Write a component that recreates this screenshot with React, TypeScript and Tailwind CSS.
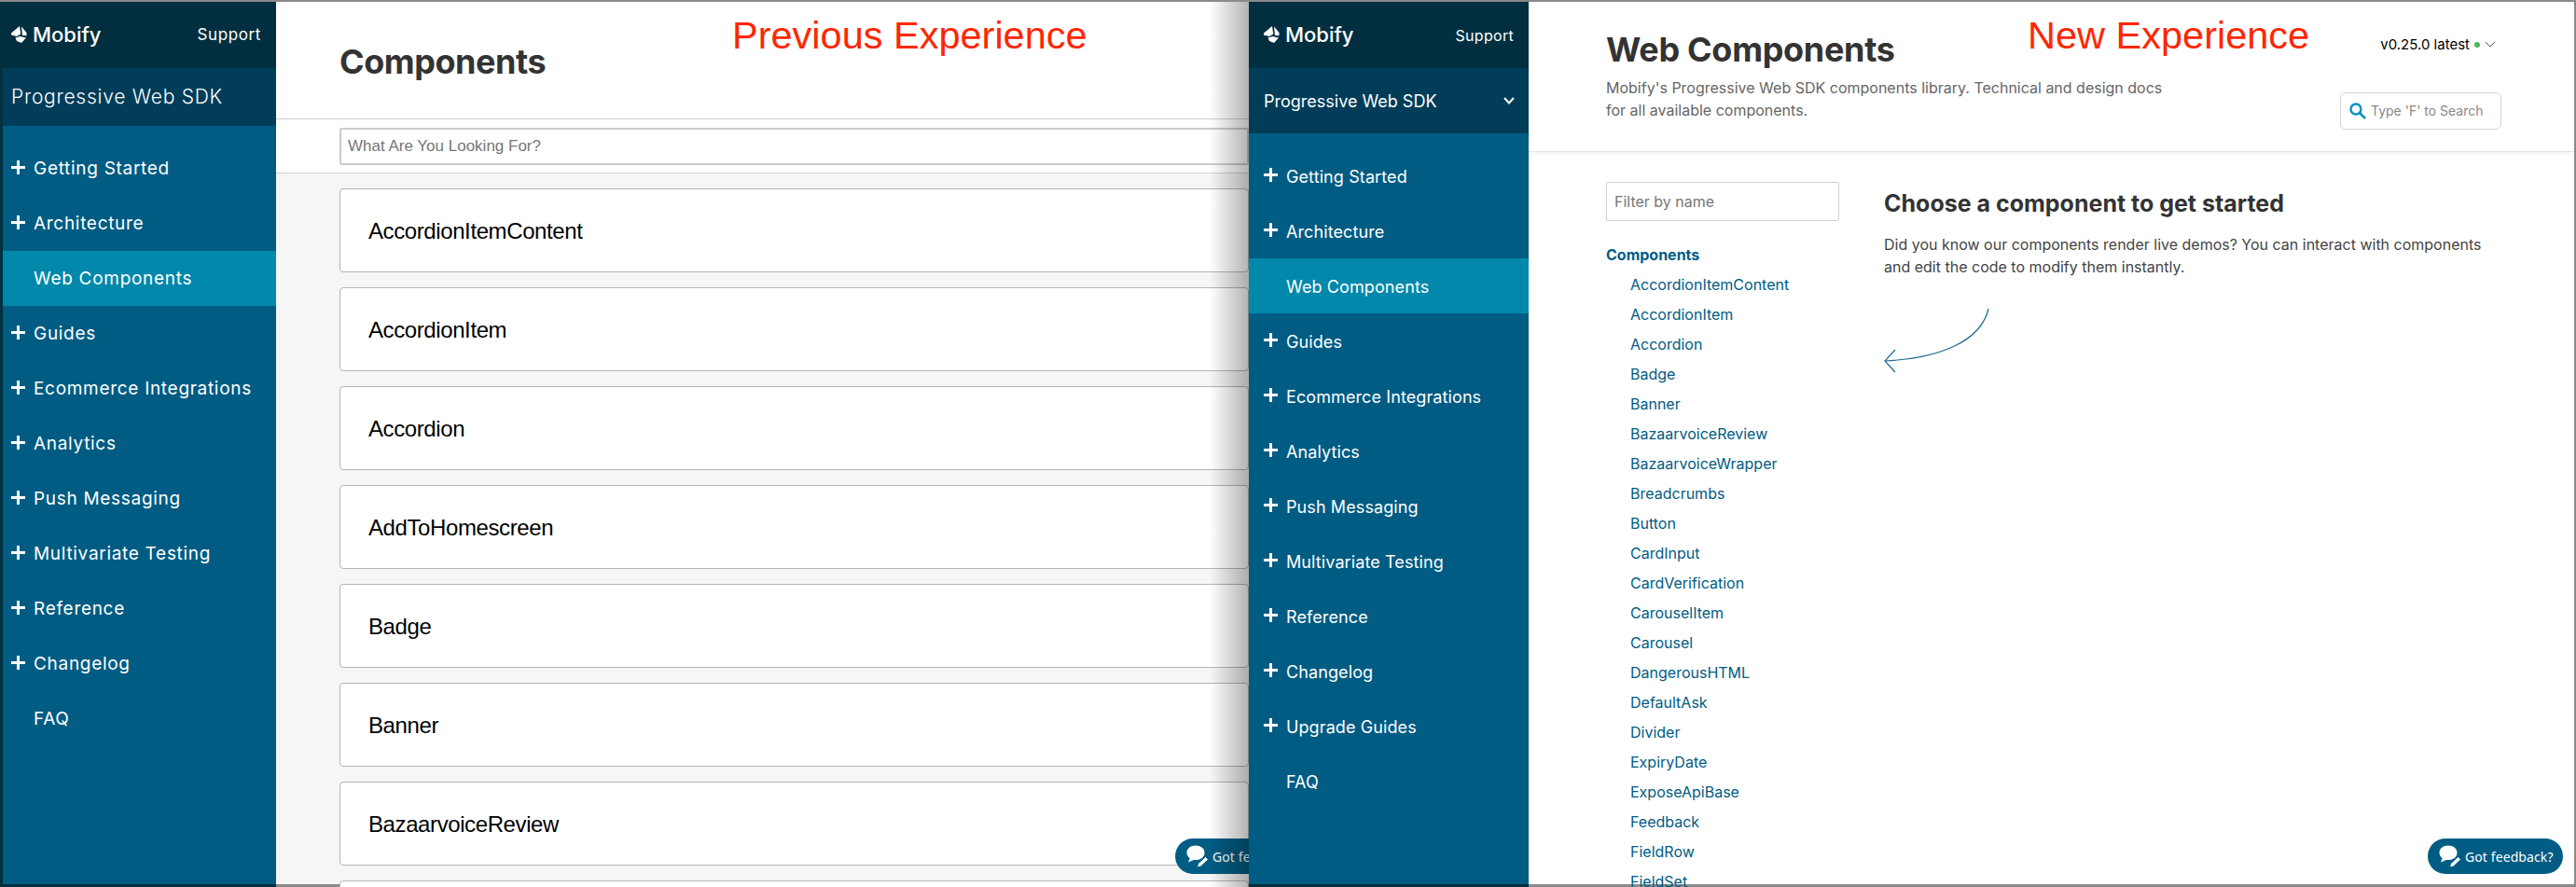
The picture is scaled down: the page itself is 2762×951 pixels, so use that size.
import React from "react";

const leftNav = ["Getting Started","Architecture","Web Components","Guides","Ecommerce Integrations","Analytics","Push Messaging","Multivariate Testing","Reference","Changelog","FAQ"];
const rightNav = ["Getting Started","Architecture","Web Components","Guides","Ecommerce Integrations","Analytics","Push Messaging","Multivariate Testing","Reference","Changelog","Upgrade Guides","FAQ"];
const cards = ["AccordionItemContent","AccordionItem","Accordion","AddToHomescreen","Badge","Banner","BazaarvoiceReview","BazaarvoiceWrapper"];
const list = ["AccordionItemContent","AccordionItem","Accordion","Badge","Banner","BazaarvoiceReview","BazaarvoiceWrapper","Breadcrumbs","Button","CardInput","CardVerification","CarouselItem","Carousel","DangerousHTML","DefaultAsk","Divider","ExpiryDate","ExposeApiBase","Feedback","FieldRow","FieldSet"];

function Logo() {
  return (
    <div className="flex items-center gap-[6px] pb-[2px]">
      <svg width="17" height="18" viewBox="0 0 17 18" fill="white">
        <path d="M0 7.500L9 0l1.200 8.500L6 11 0 9.500z" />
        <path d="M11 .5L16.500 7v3.200L12 10z" />
        <path d="M4.500 12.500l5-1.500 6.500 1.500-5 5.500-5-2z" />
      </svg>
      <span className="text-[22px] leading-none font-medium text-white font-['Inter',sans-serif]">Mobify</span>
    </div>
  );
}

function Nav({ items, pad, text }: { items: string[]; pad: string; text: string }) {
  return (
    <div className="flex flex-col pt-[16px] text-white">
      {items.map((n) => {
        const active = n === "Web Components";
        const plain = active || n === "FAQ";
        return (
          <div key={n} className={`flex items-center h-[59px] ${pad} ${active ? "bg-[#0288aa]" : ""}`}>
            <span className="w-[24px] flex -mt-[3px]">
              {!plain && (
                <svg width="15" height="15" viewBox="0 0 15 15"><path d="M7.500 0v15M0 7.500h15" stroke="white" strokeWidth="3" /></svg>
              )}
            </span>
            <span className={`pt-[2px] font-['Inter',sans-serif] text-white whitespace-nowrap ${text}`}>{n}</span>
          </div>
        );
      })}
    </div>
  );
}

function Feedback({ className }: { className: string }) {
  return (
    <div className={`absolute top-[897px] h-[38px] rounded-full bg-[#005c83] flex items-center pl-[12px] gap-[4px] text-white text-[14px] tracking-[0.1px] font-['Noto_Sans',sans-serif] whitespace-nowrap ${className}`}>
      <svg width="24" height="24" viewBox="0 0 24 24" fill="white">
        <path d="M10 .5C4.500.5.5 3.800.5 8.200c0 2.400 1.200 4.400 3.200 5.800L2 18.500l5.800-2.600c.8.2 1.500.2 2.200.2 5.500 0 9.500-3.400 9.500-7.900S15.500.5 10 .5z" />
        <path d="M20.500 12.500l3 3-8 7.500-4 1 1-4z" stroke="#005c83" strokeWidth="1" />
      </svg>
      <span>Got feedback?</span>
    </div>
  );
}

export default function App() {
  return (
    <div className="relative flex w-[2762px] h-[951px] overflow-hidden bg-white border-t-2 border-r-2 border-[#8a8a8a]">
      {/* previous */}
      <div className="relative flex w-[1339px] shrink-0 h-full overflow-hidden">
        <div className="w-[296px] shrink-0 h-full bg-[#005c83] border-l-[3px] border-b-[3px] border-[#02303f] flex flex-col">
          <div className="h-[71px] shrink-0 bg-[#022f40] flex items-center justify-between pl-[9px] pr-[16px]">
            <Logo />
            <span className="text-[17px] text-white font-['Inter',sans-serif] tracking-[0.6px]">Support</span>
          </div>
          <div className="h-[62px] shrink-0 bg-[#013d59] flex items-center pl-[9px] text-[21px] text-white font-['Inter',sans-serif] font-light tracking-[0.75px]">Progressive Web SDK</div>
          <Nav items={leftNav} pad="pl-[9px]" text="text-[19px] tracking-[0.7px]" />
        </div>
        <div className="flex-1 min-w-0 flex flex-col bg-[#f6f6f6] border-b-[3px] border-[#8a8a8a]">
          <div className="bg-white h-[126px] shrink-0 border-b border-[#cfcfcf] pl-[68px] pt-[41px]">
            <h1 className="text-[36px] leading-[46px] font-bold text-[#333] font-['Inter',sans-serif] tracking-[-0.45px]">Components</h1>
          </div>
          <div className="bg-white h-[58px] shrink-0 border-b border-[#cfcfcf] pl-[68px] pt-[9px]">
            <div className="h-[40px] border-2 border-[#cccccc] flex items-center pl-[7px] text-[17px] text-[#777] font-['Liberation_Sans',sans-serif] rounded-[2px]">What Are You Looking For?</div>
          </div>
          <div className="flex flex-col gap-[16px] pl-[68px] pt-[16px]">
            {cards.map((c) => (
              <div key={c} className="h-[90px] shrink-0 bg-white border border-[#b5b5b5] rounded-[4px] flex items-center pl-[30px] pt-[2px] text-[24px] text-black font-['Liberation_Sans',sans-serif] tracking-[-0.4px]">{c}</div>
            ))}
          </div>
        </div>
        <div className="absolute left-[785px] top-[12px] text-[41.5px] leading-[48px] text-[#ff2600] font-['Liberation_Sans',sans-serif]">Previous Experience</div>
        <Feedback className="left-[1260px] w-[200px]" />
        <div className="absolute right-0 top-0 bottom-0 w-[42px] bg-gradient-to-r from-transparent to-black/30" />
      </div>
      {/* new */}
      <div className="relative flex flex-1 min-w-0 h-full">
        <div className="w-[300px] shrink-0 h-full bg-[#005c83] border-b-[3px] border-[#02303f] flex flex-col">
          <div className="h-[71px] shrink-0 bg-[#022f40] flex items-center justify-between pl-[16px] pr-[16px]">
            <Logo />
            <span className="text-[16px] text-white font-['Inter',sans-serif] tracking-[0.3px]">Support</span>
          </div>
          <div className="h-[70px] shrink-0 bg-[#013d59] flex items-center justify-between pl-[16px] pr-[14px] text-[18px] text-white font-['Inter',sans-serif]">
            <span>Progressive Web SDK</span>
            <svg width="14" height="10" viewBox="0 0 14 10"><path d="M2 2l5 5.500L12 2" fill="none" stroke="white" strokeWidth="2" /></svg>
          </div>
          <Nav items={rightNav} pad="pl-[16px]" text="text-[18px] tracking-[0.1px]" />
        </div>
        <div className="flex-1 min-w-0 flex flex-col border-b-[3px] border-[#8a8a8a]">
          <div className="h-[161px] shrink-0 border-b border-[#e6e6e6] shadow-[0_2px_4px_rgba(0,0,0,0.05)] pl-[83px] pr-[78px] flex justify-between">
            <div className="pt-[30px]">
              <h1 className="text-[36px] leading-[42px] font-bold text-[#333] font-['Inter',sans-serif] tracking-[-0.3px]">Web Components</h1>
              <p className="mt-[8px] w-[620px] text-[16px] leading-[24px] text-[#666] font-['Inter',sans-serif]">Mobify's Progressive Web SDK components library. Technical and design docs for all available components.</p>
            </div>
            <div className="flex flex-col items-end pt-[35px]">
              <div className="flex items-center gap-[5px] text-[15px] text-black font-['Inter',sans-serif] pr-[6px]">
                <span>v0.25.0 latest</span>
                <span className="w-[6px] h-[6px] rounded-full bg-[#4bb85c]" />
                <svg width="12" height="8" viewBox="0 0 12 8"><path d="M1 1l5 5 5-5" fill="none" stroke="#555" strokeWidth="1" /></svg>
              </div>
              <div className="mt-[39px] w-[173px] h-[40px] border border-[#d5d5d5] rounded-[6px] flex items-center pl-[9px] gap-[5px] text-[14px] text-[#888] font-['Inter',sans-serif] whitespace-nowrap">
                <svg width="18" height="18" viewBox="0 0 18 18"><circle cx="7" cy="7" r="5.500" fill="none" stroke="#0c8fc6" strokeWidth="2.400" /><path d="M11 11l6 6" stroke="#0c8fc6" strokeWidth="2.600" /></svg>
                <span>Type 'F' to Search</span>
              </div>
            </div>
          </div>
          <div className="flex pl-[83px] pt-[32px]">
            <div className="w-[250px] shrink-0">
              <div className="h-[42px] border border-[#cfcfcf] rounded-[2px] flex items-center pl-[8px] text-[16px] text-[#777] font-['Inter',sans-serif]">Filter by name</div>
              <div className="mt-[24px] text-[16px] font-bold text-[#005c83] font-['Inter',sans-serif] leading-[24px]">Components</div>
              <div className="flex flex-col pl-[26px] mt-[4px]">
                {list.map((i) => (
                  <div key={i} className="h-[32px] flex items-center text-[16px] text-[#005c83] font-['Inter',sans-serif] whitespace-nowrap">{i}</div>
                ))}
              </div>
            </div>
            <div className="pl-[48px] pt-[8px]">
              <h2 className="text-[25px] leading-[30px] font-bold text-[#333] font-['Inter',sans-serif]">Choose a component to get started</h2>
              <p className="mt-[17px] w-[660px] text-[16px] leading-[24px] text-[#444] font-['Inter',sans-serif]">Did you know our components render live demos? You can interact with components and edit the code to modify them instantly.</p>
              <svg className="block mt-[32px]" width="116" height="72" viewBox="0 0 116 72" fill="none" stroke="#1d6a8f" strokeWidth="1.200">
                <path d="M112 1C104 36 60 54 1 57" />
                <path d="M12 45L1 57l11 12" />
              </svg>
            </div>
          </div>
        </div>
        <div className="absolute left-[835px] top-[12px] text-[41.5px] leading-[48px] text-[#ff2600] font-['Liberation_Sans',sans-serif]">New Experience</div>
        <Feedback className="right-[12px] w-[145px]" />
      </div>
    </div>
  );
}
